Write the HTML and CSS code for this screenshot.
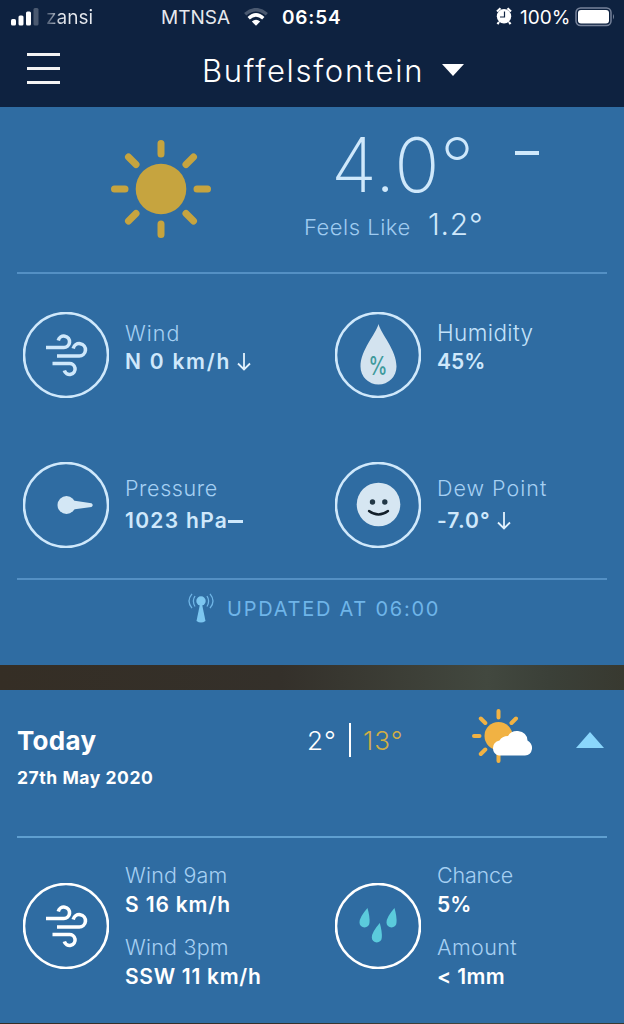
FILE: index.html
```
<!DOCTYPE html>
<html lang="en">
<head>
    <meta charset="UTF-8">
    <meta name="viewport" content="width=device-width, initial-scale=1.0">
    <title>Buffelsfontein Weather</title>
    <link rel="stylesheet" href="styles.css">
</head>
<body>
    <svg class="defs" width="0" height="0">
        <symbol id="wind" viewBox="0 0 86 86">
            <g fill="none" stroke="currentColor" stroke-width="3.6">
                <path d="M23 35.5H40.5A5.7 5.7 0 1 0 35.3 28.5"/>
                <path d="M34 44H56A6.2 6.2 0 1 0 50.2 36.5"/>
                <path d="M29.5 51.500H46A5.500 5.500 0 1 1 41.300 58.500"/>
            </g>
        </symbol>
    </svg>

    <header class="top">
        <div class="status">
            <svg class="signal" width="28" height="18" viewBox="0 0 28 18">
                <g fill="#fff">
                    <rect x="0" y="11" width="5" height="6.5" rx="1.5"/>
                    <rect x="7.5" y="7.5" width="5" height="10" rx="1.5"/>
                    <rect x="15" y="3.5" width="5" height="14" rx="1.5"/>
                    <rect x="22.5" y="0" width="5" height="17.5" rx="1.5" opacity=".25"/>
                </g>
            </svg>
            <span class="carrier">zansi</span>
            <span class="network">MTNSA</span>
            <svg class="wifi" width="24" height="18" viewBox="0 0 24 18">
                <g fill="none" stroke="#fff" stroke-width="3.4">
                    <path d="M1.2 6.3Q12 -3 22.8 6.3" opacity=".25"/>
                    <path d="M4.7 10.2Q12 3.6 19.3 10.2"/>
                </g>
                <path d="M7.8 13.5Q12 10 16.2 13.5L12 17.8Z" fill="#fff"/>
            </svg>
            <span class="time">06:54</span>
            <svg class="alarm" width="16" height="18" viewBox="0 0 16 18">
                <circle cx="8" cy="9.3" r="7.2" fill="#fff"/>
                <path d="M1 4.5L4.5 1.3M15 4.5L11.5 1.3M3 15L1.5 17.2M13 15L14.5 17.2" stroke="#fff" stroke-width="2.2"/>
                <path d="M8.5 4.5V10H4" fill="none" stroke="#0e2240" stroke-width="1.2"/>
            </svg>
            <span class="percent">100%</span>
            <svg class="battery" width="40" height="20" viewBox="0 0 40 20">
                <rect x="1" y="1" width="35" height="17.5" rx="4.5" fill="none" stroke="#77839a" stroke-width="1.5"/>
                <rect x="3" y="3" width="31" height="13.5" rx="3" fill="#fff"/>
                <path d="M38 7Q40 9.7 38 12.5Z" fill="#77839a"/>
            </svg>
        </div>
        <div class="title-bar">
            <div class="menu"><i></i><i></i><i></i></div>
            <h1>Buffelsfontein</h1>
            <svg class="caret" width="22" height="12" viewBox="0 0 22 12"><path d="M0 0H22L11 12Z" fill="#fff"/></svg>
        </div>
    </header>

    <section class="current">
        <div class="now">
            <svg class="sun" width="102" height="100" viewBox="-51 -50 102 100">
                <circle r="25.3" fill="#c6a43f"/>
                <path d="M0 -45.5V-35M0 45.5V35M-46.5 0H-36M46.5 0H36M-32.5 -32L-25 -24.5M32.5 -32L25 -24.5M-32.5 32L-25 24.5M32.5 32L25 24.5" stroke="#c6a43f" stroke-width="7" stroke-linecap="round"/>
            </svg>
            <div class="temps">
                <div class="temp"><span>4.0°</span><i class="steady"></i></div>
                <div class="feels"><span class="feels-label">Feels Like</span><span class="feels-value">1.2°</span></div>
            </div>
        </div>

        <div class="grid">
            <div class="item">
                <svg class="icon" viewBox="0 0 86 86">
                    <circle cx="43" cy="43" r="42" class="ring"/>
                    <use href="#wind"/>
                </svg>
                <div class="text">
                    <p class="label wind-label">Wind</p>
                    <p class="value"><span class="wind-value">N 0 km/h</span><svg class="arrow" width="14" height="18" viewBox="0 0 14 18"><path d="M7 0V16.500M1 10.500L7 16.500L13 10.500"/></svg></p>
                </div>
            </div>
            <div class="item">
                <svg class="icon" viewBox="0 0 86 86">
                    <circle cx="43" cy="43" r="42" class="ring"/>
                    <path d="M43.5 12C46 22 61.5 38 61.5 54.5A18 18 0 0 1 25.5 54.5C25.5 38 41 22 43.5 12Z" fill="#d3e3ef"/>
                    <text x="43" y="62.5" text-anchor="middle" textLength="19" lengthAdjust="spacingAndGlyphs" class="drop-text">%</text>
                </svg>
                <div class="text">
                    <p class="label humidity">Humidity</p>
                    <p class="value">45%</p>
                </div>
            </div>
            <div class="item low">
                <svg class="icon" viewBox="0 0 86 86">
                    <circle cx="43" cy="43" r="42" class="ring"/>
                    <path d="M50 38.5L68.5 41.2Q71 43 68.5 45L50 47.5Z" fill="#d3e7f5"/>
                    <circle cx="43.5" cy="43" r="9" fill="#d3e7f5"/>
                </svg>
                <div class="text">
                    <p class="label pressure-label">Pressure</p>
                    <p class="value"><span class="pressure-value">1023 hPa</span><i class="dash"></i></p>
                </div>
            </div>
            <div class="item low">
                <svg class="icon" viewBox="0 0 86 86">
                    <circle cx="43" cy="43" r="42" class="ring"/>
                    <circle cx="43.5" cy="42.5" r="21.8" fill="#d6e6f2"/>
                    <circle cx="37.5" cy="40" r="2.7" fill="#223746"/>
                    <circle cx="49.8" cy="40" r="2.7" fill="#223746"/>
                    <path d="M34 49Q43.5 56 53 49" fill="none" stroke="#14202a" stroke-width="2.4" stroke-linecap="round"/>
                </svg>
                <div class="text">
                    <p class="label dew-label">Dew Point</p>
                    <p class="value"><span class="dew-value">-7.0°</span><svg class="arrow" width="14" height="18" viewBox="0 0 14 18"><path d="M7 0V16.500M1 10.500L7 16.500L13 10.500"/></svg></p>
                </div>
            </div>
        </div>

        <div class="updated">
            <svg width="26" height="30" viewBox="0 0 26 30">
                <circle cx="13" cy="8" r="4.7" fill="#7cc6f0"/>
                <path d="M12 11H14L17.5 28Q13 31 8.500 28Z" fill="#7cc6f0"/>
                <path d="M7 3Q3.8 8 7 13.5M4 .8Q-2 8 4 15.2M19 3Q22.2 8 19 13.5M22 .8Q28 8 22 15.2" fill="none" stroke="#6fb5e6" stroke-width="1.3"/>
            </svg>
            <span>UPDATED AT 06:00</span>
        </div>
    </section>

    <section class="forecast">
        <div class="day">
            <div class="date">
                <h2>Today</h2>
                <p>27th May 2020</p>
            </div>
            <div class="range"><span class="min">2°</span><span class="max">13°</span></div>
            <svg class="cloudy" width="62" height="56" viewBox="0 0 62 56">
                <circle cx="27.5" cy="28" r="14" fill="#f1b243"/>
                <path d="M27.5 3V9.5M27.5 46V53M3 28H8.5M9.8 10.5L14.3 15M45 10.5L40.5 15M9.8 46L14.3 41.5" stroke="#f1b243" stroke-width="4" stroke-linecap="round"/>
                <path d="M28 47.5A7.2 7.2 0 0 1 22 40Q22 34 28.5 32.5Q31 28 37 28Q40 22.5 47 23Q56 24 56.5 32.5Q61.5 35.5 61 41Q60 47 54 47.5Z" fill="#fff"/>
            </svg>
            <svg class="collapse" width="28" height="16" viewBox="0 0 28 16"><path d="M0 16H28L14 0Z" fill="#8ad6fc"/></svg>
        </div>

        <div class="grid">
            <div class="item">
                <svg class="icon" viewBox="0 0 86 86">
                    <circle cx="43" cy="43" r="42" class="ring"/>
                    <use href="#wind"/>
                </svg>
                <div class="text">
                    <p class="label">Wind 9am</p>
                    <p class="value morning">S 16 km/h</p>
                    <p class="label second">Wind 3pm</p>
                    <p class="value afternoon">SSW 11 km/h</p>
                </div>
            </div>
            <div class="item">
                <svg class="icon" viewBox="0 0 86 86">
                    <circle cx="43" cy="43" r="42" class="ring"/>
                    <g fill="#5bcbdc">
                        <path id="drop" d="M32.5 25Q35 34 34.5 39.5A5 5 0 0 1 24.500 39.5Q24.500 34 32.5 25Z"/>
                        <use href="#drop" x="27"/>
                        <use href="#drop" x="12.3" y="15"/>
                    </g>
                </svg>
                <div class="text">
                    <p class="label chance">Chance</p>
                    <p class="value">5%</p>
                    <p class="label second amount">Amount</p>
                    <p class="value amount">&lt; 1mm</p>
                </div>
            </div>
        </div>
    </section>
</body>
</html>
```
FILE: styles.css
```
* {
    box-sizing: border-box;
}
body {
    margin: 0;
    width: 624px;
    height: 1024px;
    overflow: hidden;
    font-family: Inter, "Open Sans", sans-serif;
    background: linear-gradient(90deg, #352e25 0%, #34302a 45%, #42483f 78%, #3b4038 88%, #383930 100%);
}
h1, h2, p {
    margin: 0;
}
svg {
    display: block;
    flex: none;
}
.defs {
    height: 0;
}

/* header */
.top {
    height: 107px;
    background-color: #0e2240;
    color: #fff;
}
.status {
    display: flex;
    height: 36px;
    padding-left: 11px;
    font-size: 19px;
    line-height: 35px;
}
.signal {
    margin-top: 8px;
}
.carrier {
    width: 115px;
    margin-left: 7px;
    color: transparent;
    background: linear-gradient(90deg, #42526b 0, #d5dae2 14px, #e6e9ee 20px);
    -webkit-background-clip: text;
    background-clip: text;
}
.network {
    width: 83px;
    font-size: 19px;
    color: #e6e9ee;
}
.wifi {
    margin-top: 8px;
}
.time {
    width: 214px;
    margin-left: 14px;
    font-weight: 600;
    letter-spacing: 0.8px;
}
.alarm {
    margin-top: 7px;
}
.percent {
    width: 55px;
    margin-left: 8px;
}
.battery {
    margin-top: 7px;
}
.title-bar {
    display: flex;
    padding-left: 27px;
}
.menu {
    display: flex;
    flex-direction: column;
    gap: 11px;
    width: 33px;
    padding-top: 17px;
}
.menu i {
    height: 3px;
    background-color: #f4f4f4;
}
h1 {
    width: 240px;
    margin-left: 142px;
    font-size: 31px;
    font-weight: 300;
    line-height: 69px;
    letter-spacing: 1.7px;
    white-space: nowrap;
}
.caret {
    margin-top: 28px;
}

/* panels */
.current, .forecast {
    background-color: #2f6ca2;
}
.current {
    height: 558px;
    margin-bottom: 25px;
    color: #cfe8fb;
}
.forecast {
    height: 333px;
    color: #fff;
}
.now {
    display: flex;
    height: 167px;
    margin: 0 17px;
    padding: 32px 0 0 93px;
    border-bottom: 2px solid #5490c4;
}
.temps {
    margin-left: 92px;
}
.temp {
    display: flex;
    height: 63px;
    padding-left: 27px;
    font-size: 75px;
    font-weight: 250;
    line-height: 52px;
}
.temp span {
    width: 184px;
    letter-spacing: 0.5px;
}
.steady {
    width: 24px;
    height: 4px;
    margin-top: 12px;
    background-color: #cfe8fb;
}
.feels {
    display: flex;
    align-items: baseline;
    line-height: 44px;
}
.feels-label {
    width: 124px;
    font-size: 22px;
    font-weight: 300;
    letter-spacing: 0.5px;
    color: #9fcbf0;
    white-space: nowrap;
}
.feels-value {
    font-size: 30px;
    font-weight: 300;
    letter-spacing: 0.8px;
}

/* readings */
.grid {
    display: grid;
    grid-template-columns: 312px 312px;
}
.current .grid {
    grid-template-rows: 150px 155px;
    padding-top: 38px;
    height: 304px;
}
.item {
    display: flex;
    padding-left: 23px;
}
.icon {
    width: 86px;
    height: 86px;
}
.ring {
    fill: none;
    stroke: currentColor;
    stroke-width: 2.6;
}
.drop-text {
    font-size: 25px;
    font-weight: 500;
    fill: #3f9a9c;
}
.text {
    margin-left: 16px;
    padding-top: 7px;
    line-height: 28px;
    white-space: nowrap;
}
.label {
    font-size: 21.5px;
    font-weight: 300;
    letter-spacing: 0.2px;
    color: #a6d0f3;
}
.value {
    display: flex;
    align-items: center;
    margin-top: 1px;
    font-size: 21px;
    font-weight: 600;
}
.humidity {
    font-size: 22.5px;
    letter-spacing: 0.4px;
    color: #c3e2fa;
}
.wind-label {
    letter-spacing: 1px;
}
.wind-value {
    letter-spacing: 1.75px;
}
.pressure-label {
    letter-spacing: 0.6px;
}
.pressure-value {
    letter-spacing: 1.3px;
}
.dew-label {
    letter-spacing: 1px;
}
.dew-value {
    letter-spacing: 1.1px;
}
.low .text {
    padding-top: 12px;
}
.low .value {
    margin-top: 5px;
}
.arrow {
    margin-left: 6px;
    fill: none;
    stroke: #e3f2fd;
    stroke-width: 1.8;
}
.dash {
    width: 15px;
    height: 3px;
    background-color: #cfe8fb;
}
.updated {
    display: flex;
    align-items: center;
    height: 58px;
    margin: 0 17px;
    padding-left: 171px;
    border-top: 2px solid #5490c4;
    font-size: 20px;
    letter-spacing: 1.75px;
    color: #6fb5e9;
}
.updated span {
    margin: 2px 0 0 13px;
}

/* forecast */
.day {
    display: flex;
    height: 148px;
    margin: 0 17px;
    border-bottom: 2px solid #5f9fd0;
}
.date {
    width: 290px;
    padding-top: 34px;
}
h2 {
    font-size: 26px;
    line-height: 34px;
    letter-spacing: 0.3px;
}
.date p {
    margin-top: 6px;
    font-size: 17.5px;
    font-weight: 700;
    line-height: 28px;
    letter-spacing: 0.55px;
}
.range {
    display: flex;
    width: 164px;
    height: 34px;
    margin-top: 33px;
    font-size: 26px;
    font-weight: 300;
    line-height: 36px;
    letter-spacing: 1px;
}
.min {
    width: 44px;
    border-right: 2px solid #fff;
}
.max {
    margin-left: 12px;
    color: #d2ae45;
}
.cloudy {
    margin-top: 18px;
}
.collapse {
    margin: 42px 0 0 43px;
}
.forecast .item {
    padding-top: 45px;
}
.forecast .text {
    margin-top: -22px;
    padding-top: 0;
    line-height: 29px;
}
.forecast .value {
    margin-top: 0;
}
.forecast .second {
    margin-top: 14px;
}
.morning {
    letter-spacing: 0.85px;
}
.afternoon {
    letter-spacing: 0.7px;
}
.chance {
    letter-spacing: -0.2px;
}
.amount {
    letter-spacing: 0.4px;
}
```
